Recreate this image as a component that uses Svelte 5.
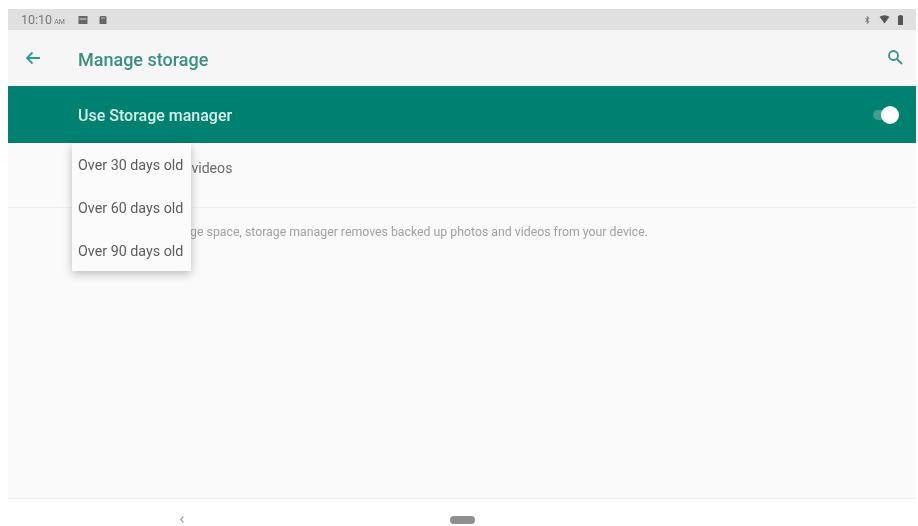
<script>
  const options = ['Over 30 days old', 'Over 60 days old', 'Over 90 days old'];
</script>

<div class="page">
  <div class="screen">
    <header class="status">
      <span class="time">10:10<small>AM</small></span>
      <svg class="note" viewBox="0 0 10 10" width="10" height="10"><path d="M0.500 1h9v8h-9z" fill="#666"/><path d="M1.500 3.500h7v1h-7z" fill="#ddd"/></svg>
      <svg class="note" viewBox="0 0 10 10" width="10" height="10"><path d="M2.500 1h5l1 1v7h-7V2z" fill="#666"/><path d="M3 2.500h4v1H3z" fill="#bbb"/></svg>
      <span class="spacer"></span>
      <svg class="bt" viewBox="0 0 10 12" width="7" height="10"><path d="M2 3l5 5.500L4.800 11V1L7 3.500 2 9" fill="none" stroke="#666" stroke-width="1.200"/></svg>
      <svg class="wifi" viewBox="0 0 12 10" width="11" height="9"><path d="M0.500 2Q6-1.500 11.500 2L6 9.500z" fill="#555"/></svg>
      <svg class="batt" viewBox="0 0 6 12" width="5" height="10"><path d="M1.700 0h2.600v1H6v11H0V1h1.700z" fill="#555"/></svg>
    </header>

    <div class="appbar">
      <svg class="back" viewBox="0 0 16 14" width="16" height="14"><path d="M15 7H2M7.500 1.500L2 7l5.500 5.500" fill="none" stroke="#2f9a87" stroke-width="1.800"/></svg>
      <h1>Manage storage</h1>
      <svg class="search" viewBox="0 0 16 16" width="16" height="16"><circle cx="6.500" cy="6.500" r="4.500" fill="none" stroke="#3d8f83" stroke-width="1.800"/><path d="M10 10l5 5" stroke="#3d8f83" stroke-width="1.800"/></svg>
    </div>

    <div class="master">
      <span class="master-label">Use Storage manager</span>
      <span class="switch"><span class="track"></span><span class="thumb"></span></span>
    </div>

    <main class="content">
      <div class="row">Remove photos &amp; videos</div>
      <p class="desc">To help free up storage space, storage manager removes backed up photos and videos from your device.</p>

      <ul class="menu">
        {#each options as option}
          <li>{option}</li>
        {/each}
      </ul>
    </main>

    <nav class="navbar">
      <svg class="chev" viewBox="0 0 6 10" width="6" height="9"><path d="M4.500 1.500L1.500 5l3 3.500" fill="none" stroke="#999" stroke-width="1.300"/></svg>
      <span class="pill"></span>
    </nav>
  </div>
</div>

<style>
  :global(body) { margin: 0; background: #fff; }

  .page {
    width: 918px;
    height: 526px;
    padding: 9px 2px 0 8px;
    box-sizing: border-box;
    overflow: hidden;
    font-family: Roboto, "Liberation Sans", sans-serif;
    filter: blur(0.5px);
  }
  .screen { height: 517px; display: flex; flex-direction: column; }

  .status {
    height: 21px;
    flex: none;
    background: #e0e0e0;
    display: flex;
    align-items: center;
    padding: 0 13px 0 13px;
    color: #777;
    font-size: 12.500px;
  }
  .time { margin-right: 13px; }
  .time small { font-size: 7px; margin-left: 2px; }
  .note + .note { margin-left: 10px; }
  .spacer { flex: 1; }
  .wifi { margin-left: 8px; }
  .batt { margin-left: 8px; }

  .appbar {
    height: 56px;
    flex: none;
    background: #f6f6f6;
    display: flex;
    align-items: center;
    padding: 0 13px 0 17px;
  }
  .appbar h1 {
    margin: 2px 0 0 37px;
    flex: 1;
    font-size: 18px;
    font-weight: 500;
    color: #3a8f80;
  }
  .search { margin-top: -2px; }

  .master {
    height: 57px;
    flex: none;
    background: #00806f;
    color: #d3f1ea;
    font-size: 16px;
    font-weight: 500;
    display: flex;
    align-items: center;
    justify-content: space-between;
    padding: 0 17px 0 70px;
  }
  .master-label { margin-top: 1px; }
  .switch { position: relative; width: 26px; height: 18px; display: block; }
  .track {
    position: absolute;
    left: 0;
    top: 4px;
    width: 24px;
    height: 10px;
    border-radius: 5px;
    background: #3f9e8f;
  }
  .thumb {
    position: absolute;
    right: 0;
    top: 0;
    width: 18px;
    height: 18px;
    border-radius: 50%;
    background: #fff;
  }

  .content {
    position: relative;
    flex: 1;
    background: #fafafa;
    border-bottom: 1px solid #eeeeee;
  }
  .row {
    height: 65px;
    box-sizing: border-box;
    padding: 17px 0 0 70px;
    font-size: 14.100px;
    color: #6b6b6b;
    border-bottom: 1px solid #efefef;
  }
  .desc {
    margin: 17px 0 0 70px;
    font-size: 12.300px;
    line-height: 14px;
    color: #a0a0a0;
  }

  .menu {
    position: absolute;
    left: 64px;
    top: 0;
    width: 119px;
    height: 128px;
    margin: 0;
    padding: 0;
    list-style: none;
    background: #fbfbfb;
    box-shadow: 0 3px 9px rgba(0, 0, 0, 0.25);
    display: flex;
    flex-direction: column;
    justify-content: space-around;
  }
  .menu li {
    padding: 2px 0 0 6px;
    font-size: 14.300px;
    color: #5c5c5c;
    white-space: nowrap;
  }

  .navbar {
    flex: none;
    height: 27px;
    box-sizing: border-box;
    padding: 14px 0 0 171px;
    background: #fff;
    display: flex;
    align-items: center;
    gap: 265px;
  }
  .pill {
    width: 25px;
    height: 8px;
    border-radius: 4px;
    background: #8e8e8e;
  }
</style>
